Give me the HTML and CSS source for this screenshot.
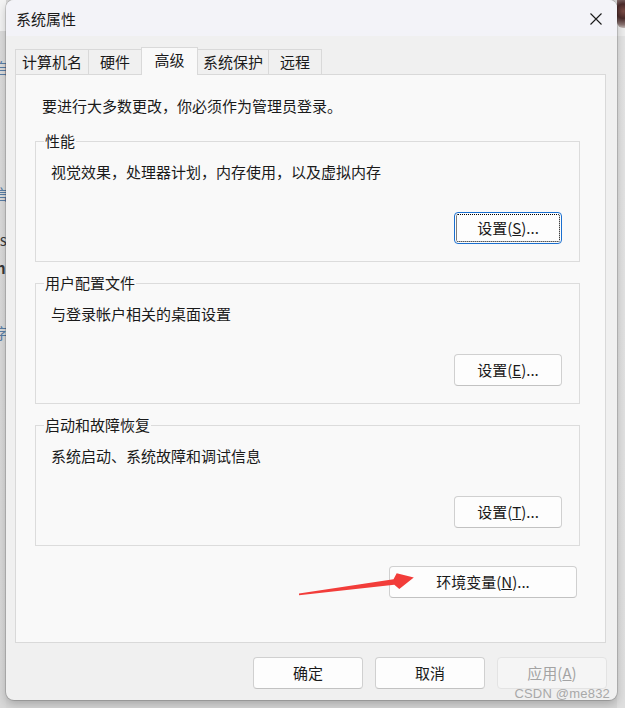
FILE: index.html
```html
<!DOCTYPE html>
<html lang="zh-CN">
<head>
    <meta charset="UTF-8">
    <meta name="viewport" content="width=device-width, initial-scale=1.0">
    <title>系统属性</title>
    <link rel="stylesheet" href="styles.css">
</head>
<body>

    <div class="screen">
        <!-- window behind the dialog, mostly hidden -->
        <div class="backdrop backdrop-left">
            <span class="frag frag-blue frag-1">自</span>
            <span class="frag frag-blue frag-2">言</span>
            <span class="frag frag-3">ys</span>
            <span class="frag frag-4">n</span>
            <span class="frag frag-blue frag-5">字</span>
        </div>

        <div class="dialog">
            <div class="titlebar">
                <span class="title">系统属性</span>
                <button class="close-btn" aria-label="关闭">
                    <svg width="12" height="12" viewBox="0 0 12 12">
                        <path d="M0.5 0.5 L11.5 11.5 M11.5 0.5 L0.5 11.5" stroke="#1a1a1a" stroke-width="1.1" fill="none"/>
                    </svg>
                </button>
            </div>

            <div class="tabs">
                <div class="tab">计算机名</div>
                <div class="tab">硬件</div>
                <div class="tab active">高级</div>
                <div class="tab">系统保护</div>
                <div class="tab">远程</div>
            </div>

            <div class="panel">
                <p class="notice">要进行大多数更改，你必须作为管理员登录。</p>

                <fieldset class="group">
                    <legend>性能</legend>
                    <p class="group-desc">视觉效果，处理器计划，内存使用，以及虚拟内存</p>
                    <div class="group-actions">
                        <button class="btn btn-focus">设置(<u>S</u>)...</button>
                    </div>
                </fieldset>

                <fieldset class="group">
                    <legend>用户配置文件</legend>
                    <p class="group-desc">与登录帐户相关的桌面设置</p>
                    <div class="group-actions">
                        <button class="btn">设置(<u>E</u>)...</button>
                    </div>
                </fieldset>

                <fieldset class="group">
                    <legend>启动和故障恢复</legend>
                    <p class="group-desc">系统启动、系统故障和调试信息</p>
                    <div class="group-actions">
                        <button class="btn">设置(<u>T</u>)...</button>
                    </div>
                </fieldset>

                <div class="env-row">
                    <button class="btn btn-env">环境变量(<u>N</u>)...</button>
                </div>
            </div>

            <div class="footer">
                <button class="btn btn-footer">确定</button>
                <button class="btn btn-footer">取消</button>
                <button class="btn btn-footer" disabled>应用(<u>A</u>)</button>
            </div>

            <!-- red annotation arrow drawn on top of the screenshot -->
            <svg class="annotation" width="611" height="700" viewBox="0 0 611 700">
                <polygon points="293,593.6 387.5,579.2 390.7,573.3 407.8,577.6 393.3,589 388.3,584.8 293,595.2" fill="#f23d3a"/>
            </svg>

            <span class="watermark">CSDN @me832</span>
        </div>

        <div class="backdrop backdrop-right">
            <div class="photo"></div>
        </div>
    </div>

</body>
</html>
```

FILE: styles.css
```css
body {
    margin: 0;
    padding: 0;
    width: 625px;
    height: 708px;
    overflow: hidden;
    background-color: #d6d6d6;
    font-family: "Noto Sans CJK SC", "Noto Sans", sans-serif;
    font-size: 15px;
    color: #1a1a1a;
}

.screen {
    display: flex;
    height: 708px;
}

/* strips of the window behind */
.backdrop {
    flex-shrink: 0;
    overflow: hidden;
}

.backdrop-left {
    width: 6px;
    display: flex;
    flex-direction: column;
    background: linear-gradient(#f3f3f3 0, #f3f3f3 31px, #dcdcdc 31px, #d8d8d8 100%);
    font-size: 15px;
    line-height: 15px;
}

.frag {
    display: block;
    margin-left: -6px;
    color: #3a3a3a;
    white-space: nowrap;
}

.frag-blue {
    color: #5a7ea6;
}

.frag-1 { margin-top: 60px; }
.frag-2 { margin-top: 111px; }
.frag-3 { margin-top: 31px; margin-left: -8px; }
.frag-4 { margin-top: 13px; margin-left: -4px; font-weight: bold; }
.frag-5 { margin-top: 50px; }

.backdrop-right {
    width: 8px;
    background: linear-gradient(#ededed 0, #ededed 36px, #e3e3e3 36px, #dedede 100%);
}

.photo {
    height: 28px;
    background: radial-gradient(circle at 80% 40%, #7a4b45 0, #4a2a2a 40%, #8a7472 75%, #d9d2d0 100%);
    border-bottom-left-radius: 6px;
}

/* dialog */
.dialog {
    position: relative;
    flex-shrink: 0;
    width: 611px;
    height: 700px;
    box-sizing: border-box;
    background-color: #f0f0f0;
    border-radius: 8px;
    box-shadow: 0 0 0 1px rgba(0, 0, 0, 0.14), 0 4px 10px rgba(0, 0, 0, 0.22);
    overflow: hidden;
}

.titlebar {
    display: flex;
    align-items: center;
    justify-content: space-between;
    height: 36px;
    padding-left: 10px;
    background-color: #f3f3f8;
}

.title {
    line-height: 20px;
    padding-top: 1px;
}

.close-btn {
    width: 42px;
    height: 36px;
    border: none;
    background: transparent;
    display: flex;
    align-items: center;
    justify-content: center;
    padding: 2px 0 0 0;
}

/* tabs */
.tabs {
    display: flex;
    align-items: flex-end;
    padding: 11px 0 0 9px;
}

.tab {
    box-sizing: border-box;
    min-width: 54px;
    height: 25px;
    padding: 0 5px;
    margin-right: -1px;
    border: 1px solid #d9d9d9;
    border-bottom: none;
    background-color: #f0f0f0;
    line-height: 23px;
    text-align: center;
}

.tab:first-child {
    padding: 0 6px;
}

.tab.active {
    position: relative;
    z-index: 1;
    min-width: 57px;
    height: 28px;
    margin-bottom: -1px;
    padding-top: 1px;
    line-height: 22px;
    background-color: #f9f9f9;
}

/* page of the active tab */
.panel {
    box-sizing: border-box;
    height: 569px;
    margin: 0 11px 0 9px;
    padding: 0 25px 0 19px;
    border: 1px solid #d9d9d9;
    background-color: #f9f9f9;
}

.notice {
    margin: 21px 0 0 7px;
    line-height: 20px;
}

.group {
    margin: 11px 0 0 0;
    padding: 0 17px 17px 8px;
    border: 1px solid #dcdcdc;
    min-width: 0;
}

.notice + .group {
    margin-top: 15px;
}

.group legend {
    padding: 0 1px;
    line-height: 20px;
}

.group-desc {
    margin: 11px 0 0 7px;
    line-height: 20px;
}

.group-actions {
    display: flex;
    justify-content: flex-end;
    margin-top: 30px;
}

/* buttons */
.btn {
    box-sizing: border-box;
    height: 32px;
    padding: 0;
    border: 1px solid #d0d0d0;
    border-bottom-color: #c2c2c2;
    border-radius: 4px;
    background-color: #fdfdfd;
    font-family: inherit;
    font-size: 15px;
    color: #1a1a1a;
    line-height: 20px;
}

.group-actions .btn {
    width: 108px;
}

.btn-focus {
    border-color: #1a6fcf;
    outline: 1px dotted #000;
    outline-offset: -3px;
}

.env-row {
    display: flex;
    justify-content: flex-end;
    margin: 20px 3px 0 0;
}

.btn-env {
    width: 188px;
}

.footer {
    display: flex;
    justify-content: flex-end;
    gap: 12px;
    padding: 14px 10px 0 0;
}

.btn-footer {
    width: 110px;
}

.btn:disabled {
    background-color: #f5f5f5;
    border-color: #e3e3e3;
    color: #a3a3a3;
}

/* screenshot annotations */
.annotation {
    position: absolute;
    left: 0;
    top: 0;
    pointer-events: none;
}

.watermark {
    position: absolute;
    right: 7px;
    bottom: -1px;
    font-family: "Liberation Sans", Arial, sans-serif;
    font-size: 13px;
    line-height: 14px;
    color: #a8a8a8;
    letter-spacing: 0.2px;
}
```
